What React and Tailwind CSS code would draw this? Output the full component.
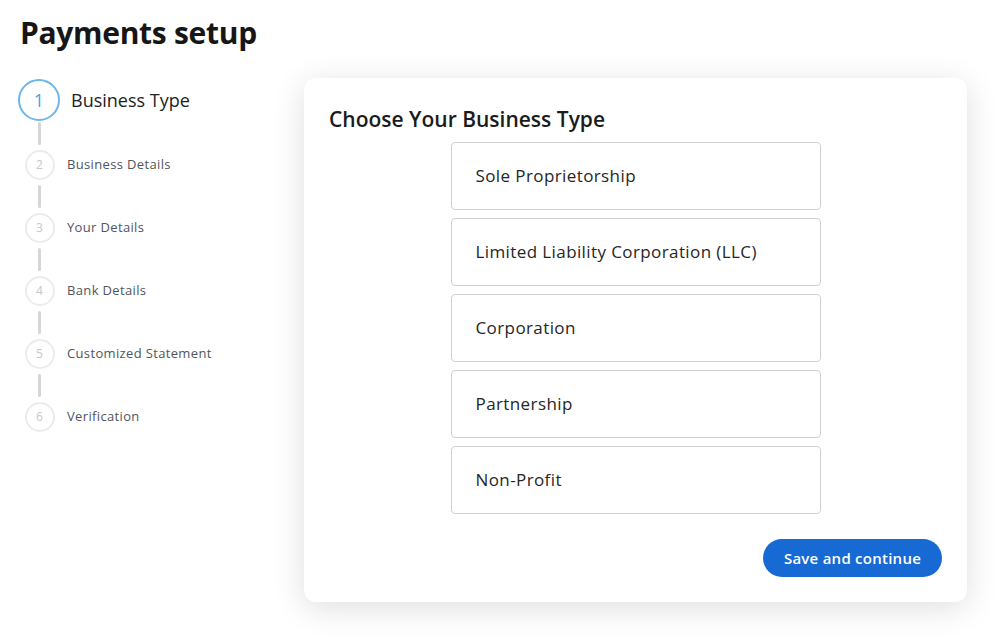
import React from "react";

const steps = [
  "Business Details",
  "Your Details",
  "Bank Details",
  "Customized Statement",
  "Verification",
];

const options = [
  "Sole Proprietorship",
  "Limited Liability Corporation (LLC)",
  "Corporation",
  "Partnership",
  "Non-Profit",
];

function Connector({ first }) {
  return (
    <div className={`flex w-[42px] justify-center ${first ? "pt-[1px] pb-[5px]" : "py-[5px]"}`}>
      <div className="h-[23px] w-[3px] rounded-full bg-[#d6d6d6]" />
    </div>
  );
}

export default function App() {
  return (
    <div
      className="min-h-[641px] w-[1000px] bg-white px-[18px] pt-[14px] text-[#1b1b1b]"
      style={{ fontFamily: "'Open Sans', Lato, Arial, sans-serif" }}
    >
      <h1 className="pl-[2px] text-[30px] font-bold leading-[38px] tracking-[-0.3px] text-[#161616]">
        Payments setup
      </h1>
      <div className="mt-[26px] flex">
        <div className="flex w-[286px] flex-col pt-[1px]">
          <div className="flex items-center">
            <div className="flex w-[42px] justify-center">
              <div className="flex h-[42px] w-[42px] items-center justify-center rounded-full border-2 border-[#6db7e8] text-[18px] text-[#4aa3e0]">
                1
              </div>
            </div>
            <span className="ml-[11px] text-[18px] text-[#222]">Business Type</span>
          </div>
          {steps.map((s, i) => (
            <React.Fragment key={s}>
              <Connector first={i === 0} />
              <div className="flex items-center">
                <div className="flex w-[42px] justify-center pl-[1px]">
                  <div className="flex h-[30px] w-[30px] items-center justify-center rounded-full border-2 border-[#ececec] text-[12px] text-[#c8c8c8]">
                    {i + 2}
                  </div>
                </div>
                <span className="ml-[7px] text-[13px] tracking-[0.35px] text-[#4f555c]">{s}</span>
              </div>
            </React.Fragment>
          ))}
        </div>
        <div className="flex h-[524px] w-[663px] flex-col rounded-[12px] bg-white px-[25px] pt-[27px] pb-[25px] shadow-[0_6px_32px_rgba(0,0,0,0.13)]">
          <h2 className="text-[21px] font-semibold leading-[28px] text-[#1b1b1b]">
            Choose Your Business Type
          </h2>
          <div className="mt-[9px] flex flex-col items-center gap-[8px]">
            {options.map((o) => (
              <div
                key={o}
                className="flex h-[68px] w-[370px] items-center rounded-[4px] border border-[#cfcfcf] bg-white px-[24px] text-[17px] tracking-[0.4px] text-[#262626]"
              >
                {o}
              </div>
            ))}
          </div>
          <div className="mt-[25px] flex justify-end">
            <button className="h-[38px] w-[179px] rounded-full bg-[#1769d4] text-[15px] font-semibold tracking-[0.25px] text-white">
              Save and continue
            </button>
          </div>
        </div>
      </div>
    </div>
  );
}
